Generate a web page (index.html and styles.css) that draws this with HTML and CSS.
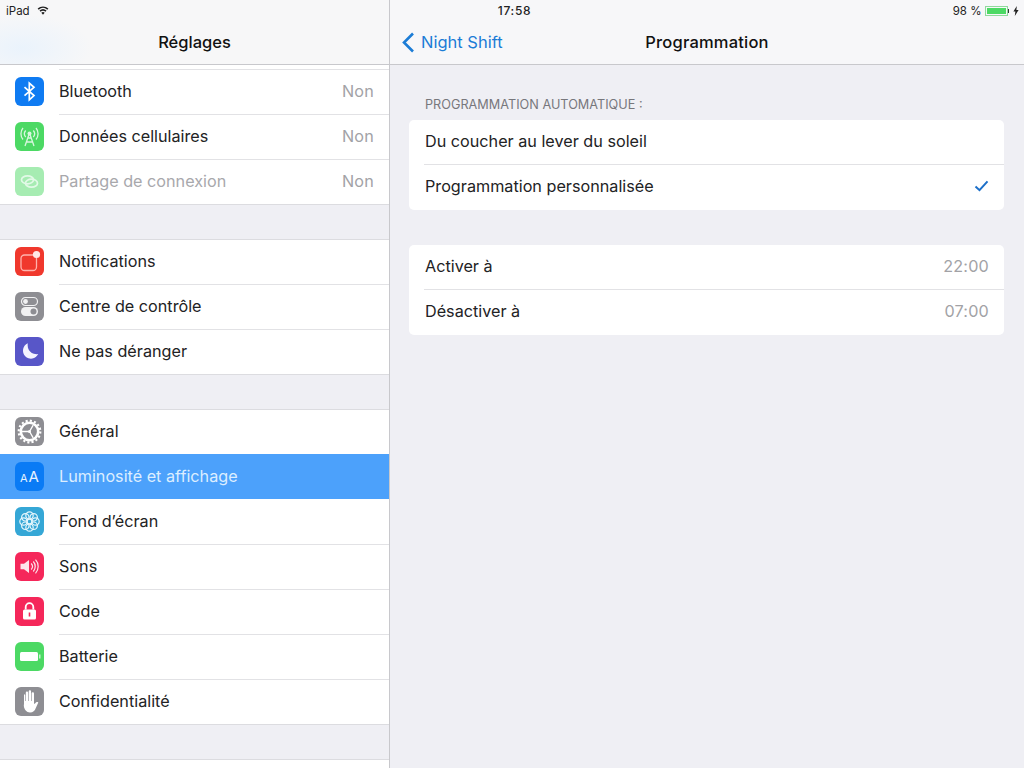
FILE: index.html
```html
<!DOCTYPE html>
<html lang="fr">
<head>
<meta charset="utf-8">
<title>Réglages</title>
<link rel="stylesheet" href="styles.css">
</head>
<body>
<div class="status">
  <div class="status-left">
    <span>iPad</span>
    <svg class="wifi" width="12" height="9" viewBox="0 0 13 10"><path d="M6.500 9.600 4.600 7.400a2.900 2.900 0 0 1 3.800 0zM3.700 6.400 2.600 5.100a6 6 0 0 1 7.800 0L9.300 6.400a4.300 4.300 0 0 0-5.600 0zM1.700 4.100.5 2.800a9.200 9.200 0 0 1 12 0l-1.200 1.300a7.400 7.400 0 0 0-9.600 0z" fill="#222"/></svg>
  </div>
  <div class="status-time">17:58</div>
  <div class="status-right">
    <span>98 %</span>
    <span class="batt"><span class="batt-fill"></span></span><span class="batt-tip"></span>
    <svg width="6" height="10" viewBox="0 0 6 10"><path d="M3.800 0 .4 5.600h2L1.800 10l3.800-6H3.400z" fill="#222"/></svg>
  </div>
</div>
<div class="app">
  <aside class="side">
    <header class="nav side-nav"><h1 class="nav-title">Réglages</h1></header>
    <div class="list">
      <div class="group clip-group">
        <div class="clip-row"></div>
        <div class="row">
          <svg class="ic" viewBox="0 0 29 29"><rect width="29" height="29" rx="6" fill="#0f7bf2"/><path d="M9.500 10.200 19 18.600l-4.700 4.300V6.100l4.700 4.200-9.500 8.400" fill="none" stroke="#fff" stroke-width="1.700"/></svg>
          <span class="label">Bluetooth</span><span class="value">Non</span>
        </div>
        <div class="row">
          <svg class="ic" viewBox="0 0 29 29"><rect width="29" height="29" rx="6" fill="#4cd964"/><g fill="none" stroke="#d8f6de" stroke-width="1.300"><path d="M14.500 11 10 24M14.500 11l4.500 13M11.500 20h6M12.700 16h3.600"/><path d="M10.700 8.500a5 5 0 0 0 0 6.500M18.300 8.500a5 5 0 0 1 0 6.500M8 6a9 9 0 0 0 0 11.500M21 6a9 9 0 0 1 0 11.500"/></g><circle cx="14.500" cy="11.500" r="2" fill="#d8f6de"/></svg>
          <span class="label">Données cellulaires</span><span class="value">Non</span>
        </div>
        <div class="row">
          <svg class="ic" viewBox="0 0 29 29"><rect width="29" height="29" rx="6" fill="#a6ecb2"/><g fill="none" stroke="#e2f9e7" stroke-width="1.700"><ellipse cx="12.500" cy="12.800" rx="6" ry="4"/><ellipse cx="16.500" cy="16.200" rx="6" ry="4"/></g></svg>
          <span class="label dim">Partage de connexion</span><span class="value">Non</span>
        </div>
      </div>
      <div class="group">
        <div class="row">
          <svg class="ic" viewBox="0 0 29 29"><rect width="29" height="29" rx="6" fill="#f0382d"/><rect x="6" y="8" width="15.500" height="15.500" rx="3.500" fill="none" stroke="#ffb3ad" stroke-width="1.300"/><circle cx="21.500" cy="7.500" r="3.600" fill="#ffe9e7"/></svg>
          <span class="label">Notifications</span>
        </div>
        <div class="row">
          <svg class="ic" viewBox="0 0 29 29"><rect width="29" height="29" rx="6" fill="#8e8e93"/><rect x="6.500" y="5.500" width="16" height="8" rx="4" fill="none" stroke="#f1f1f2" stroke-width="1.200"/><circle cx="10.500" cy="9.500" r="2.400" fill="#f1f1f2"/><rect x="6" y="15" width="17" height="9" rx="4.500" fill="#f1f1f2"/><circle cx="18.500" cy="19.500" r="3" fill="#8e8e93"/></svg>
          <span class="label">Centre de contrôle</span>
        </div>
        <div class="row">
          <svg class="ic" viewBox="0 0 29 29"><rect width="29" height="29" rx="6" fill="#5856c8"/><path d="M12.800 6.300a8 8 0 1 0 10.400 10.800 9 9 0 0 1-10.400-10.800z" fill="#f4f3ff"/></svg>
          <span class="label">Ne pas déranger</span>
        </div>
      </div>
      <div class="group">
        <div class="row">
          <svg class="ic" viewBox="0 0 29 29"><rect width="29" height="29" rx="6" fill="#8e8e93"/><circle cx="14.500" cy="14.500" r="8.700" fill="none" stroke="#fff" stroke-width="2.600"/><circle cx="14.500" cy="14.500" r="10.800" fill="none" stroke="#fff" stroke-width="2.200" stroke-dasharray="2.120 2.120"/><g stroke="#fff" stroke-width="1.300"><path d="M14.500 14.500H7M14.500 14.500l3.700-6.400M14.500 14.500l3.700 6.400"/></g><circle cx="14.500" cy="14.500" r="1.500" fill="#fff"/></svg>
          <span class="label">Général</span>
        </div>
        <div class="row selected">
          <span class="ic ic-aa"><span class="aa-s">A</span><span class="aa-l">A</span></span>
          <span class="label">Luminosité et affichage</span>
        </div>
        <div class="row">
          <svg class="ic" viewBox="0 0 29 29"><rect width="29" height="29" rx="6" fill="#35a7d6"/><g fill="none" stroke="#e4f6fc" stroke-width="1.200"><circle cx="14.500" cy="8.500" r="3.700"/><circle cx="14.500" cy="20.500" r="3.700"/><circle cx="8.500" cy="14.500" r="3.700"/><circle cx="20.500" cy="14.500" r="3.700"/><circle cx="10.300" cy="10.300" r="3.700"/><circle cx="18.700" cy="10.300" r="3.700"/><circle cx="10.300" cy="18.700" r="3.700"/><circle cx="18.700" cy="18.700" r="3.700"/><circle cx="14.500" cy="14.500" r="2.500"/></g></svg>
          <span class="label">Fond d’écran</span>
        </div>
        <div class="row">
          <svg class="ic" viewBox="0 0 29 29"><rect width="29" height="29" rx="6" fill="#f5275a"/><path d="M5.500 11.700h3.500l5-3.700v13l-5-3.700H5.500z" fill="#fde5eb"/><path d="M16.200 11.500a4.500 4.500 0 0 1 0 6M18.300 9.500a7.500 7.500 0 0 1 0 10M20.500 7.700a10 10 0 0 1 0 13.600" fill="none" stroke="#fde5eb" stroke-width="1.200"/></svg>
          <span class="label">Sons</span>
        </div>
        <div class="row">
          <svg class="ic" viewBox="0 0 29 29"><rect width="29" height="29" rx="6" fill="#f5275a"/><path d="M10.700 12.500V10a3.800 3.800 0 0 1 7.600 0v2.500" fill="none" stroke="#fff" stroke-width="1.800"/><rect x="8" y="12.500" width="13" height="10" rx="1.500" fill="#fff"/><rect x="13.700" y="15.500" width="1.600" height="4" fill="#f5275a"/></svg>
          <span class="label">Code</span>
        </div>
        <div class="row">
          <svg class="ic" viewBox="0 0 29 29"><rect width="29" height="29" rx="6" fill="#4cd964"/><rect x="5" y="10" width="18" height="9" rx="1.500" fill="#fff"/><rect x="24" y="12.500" width="1.500" height="4" fill="#c9f3d1"/></svg>
          <span class="label">Batterie</span>
        </div>
        <div class="row">
          <svg class="ic" viewBox="0 0 29 29"><rect width="29" height="29" rx="6" fill="#8e8e93"/><path d="M9 8.500v8.500l-.2 1.500c.3 4 2.800 7 6.200 7 3 0 4.800-1.700 5.800-4.500l2.500-5.500c-1.200-.8-2.300-.4-3 .8L19 17V6.500c0-1.800-2.300-1.800-2.300 0V14h-.6V4.700c0-1.800-2.400-1.800-2.400 0V14h-.6V5.800c0-1.800-2.300-1.800-2.300 0V14h-.6V8.500c0-1.700-1.200-1.700-1.200 0z" fill="#fff"/></svg>
          <span class="label">Confidentialité</span>
        </div>
      </div>
      <div class="group"><div class="row"></div></div>
    </div>
  </aside>
  <main class="detail">
    <header class="nav detail-nav">
      <a class="back">
        <svg width="13" height="21" viewBox="0 0 13 21"><path d="M11 1.500 2 10.500l9 9" fill="none" stroke="#1c7cd6" stroke-width="2.600"/></svg>
        <span>Night Shift</span>
      </a>
      <h2 class="nav-title">Programmation</h2>
    </header>
    <div class="content">
      <p class="section-title">PROGRAMMATION AUTOMATIQUE :</p>
      <section class="card">
        <div class="card-row"><span class="label">Du coucher au lever du soleil</span></div>
        <div class="card-row">
          <span class="label">Programmation personnalisée</span>
          <svg width="15" height="12" viewBox="0 0 15 12"><path d="M1.500 6.500 5.500 10.200 13.500 1.300" fill="none" stroke="#1c6fc9" stroke-width="2"/></svg>
        </div>
      </section>
      <section class="card">
        <div class="card-row"><span class="label">Activer à</span><span class="value">22:00</span></div>
        <div class="card-row"><span class="label">Désactiver à</span><span class="value">07:00</span></div>
      </section>
    </div>
  </main>
</div>
</body>
</html>
```
FILE: styles.css
```css
* { box-sizing: border-box; }
html, body { margin: 0; height: 100%; overflow: hidden; }
body { font-family: Inter, "Liberation Sans", sans-serif; color: #222224; background: #efeff4; position: relative; }
.app { display: grid; grid-template-columns: 390px 1fr; height: 768px; }
.status { position: absolute; inset: 0 0 auto 0; height: 21px; display: grid; grid-template-columns: 1fr 1fr 1fr; align-items: center; font-size: 11.5px; color: #222; z-index: 2; }
.status-left { display: flex; align-items: center; gap: 7px; padding-left: 6px; }
.status-time { text-align: center; font-weight: 500; font-size: 12px; letter-spacing: .7px; padding-left: 5px; }
.status-right { display: flex; align-items: center; justify-content: flex-end; padding-right: 5px; font-size: 11.5px; }
.batt { width: 23px; height: 10px; border: 1px solid #8fd99c; margin-left: 3px; padding: 1px; display: block; }
.batt-fill { display: block; height: 100%; background: #4cd964; }
.batt-tip { width: 1.5px; height: 4px; background: #333; margin-right: 4px; }
.nav { height: 65px; padding-top: 20px; border-bottom: 1px solid #c8c8cc; background: #f7f7f9; display: flex; align-items: center; justify-content: center; position: relative; }
.side-nav { background: radial-gradient(ellipse 70px 34px at 22px 48px, #eaf3fc, rgba(234,243,252,0)), #f7f7f8; }
.nav-title { margin: 0; font-size: 16.5px; font-weight: 500; color: #111; }
.detail-nav .nav-title { letter-spacing: .2px; }
.side { border-right: 1px solid #c8c8cc; background: #efeff4; height: 768px; overflow: hidden; }
.list { display: flex; flex-direction: column; gap: 34px; }
.group { background: #fff; border-top: 1px solid #dcdce0; }
.clip-group { border-top: 0; }
.clip-row { height: 5px; border-bottom: 1px solid #e2e2e5; margin-left: 59px; }
.row { height: 45px; display: flex; align-items: center; padding: 0 15px 3px; position: relative; font-size: 16.2px; }
.row::after { content: ""; position: absolute; left: 59px; right: 0; bottom: 0; height: 1px; background: #e2e2e5; }
.row:last-child::after { left: 0; background: #dcdce0; }
.row.selected { background: #4ca1fb; color: #dceeff; box-shadow: 0 -1px 0 #4ca1fb; }
.row.selected::after { left: 0; background: #fff; }
.ic { width: 29px; height: 29px; flex: none; margin-right: 15px; }
.ic-aa { background: #0a7bf5; border-radius: 6px; color: #e6f2ff; display: flex; align-items: baseline; justify-content: center; gap: 1px; padding-top: 5px; }
.aa-s { font-size: 11px; }
.aa-l { font-size: 15px; }
.label { flex: 1; }
.dim { color: #a8a8ac; }
.value { color: #a2a2a6; letter-spacing: .2px; }
.back { position: absolute; left: 12px; top: 20px; height: 44px; display: flex; align-items: center; gap: 6px; color: #1c7cd6; font-size: 16.5px; }
.content { padding: 0 20px 0 19px; }
.section-title { margin: 32px 0 0 16px; height: 23px; font-size: 12.7px; line-height: 16px; color: #77777c; }
.card { background: #fff; border-radius: 5px; margin-bottom: 35px; }
.card-row { height: 45px; display: flex; align-items: center; padding: 0 15px 3px 16px; font-size: 16.2px; position: relative; }
.card-row + .card-row::before { content: ""; position: absolute; left: 15px; right: 0; top: -1px; height: 1px; background: #e2e2e5; }
```
